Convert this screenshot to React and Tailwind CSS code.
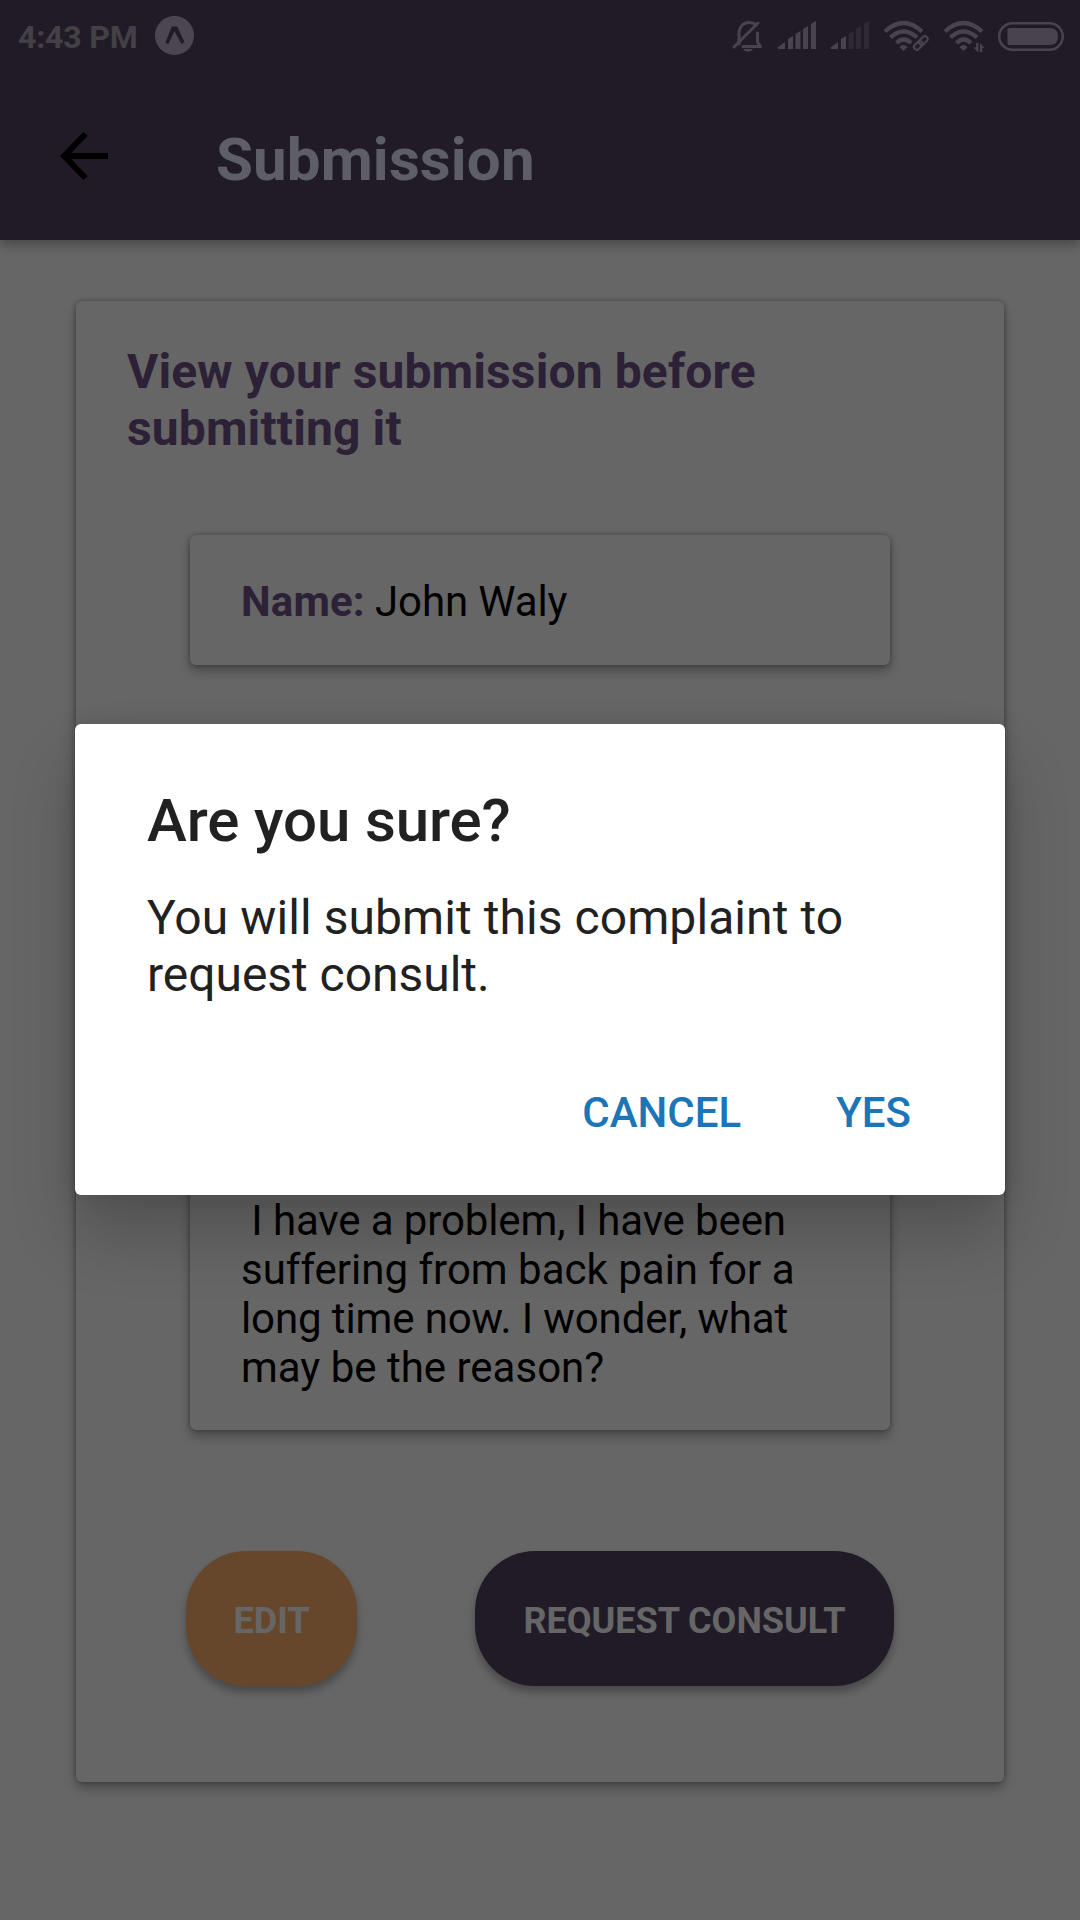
function StatusBar() {
  return (
    <div className="flex h-[72px] items-center justify-between pl-[18px] pr-4 text-white">
      <div className="flex items-center">
        <span className="w-[120px] whitespace-nowrap pt-[2px] text-[32px] font-bold leading-[40px] tracking-[-0.15px] text-white/50">4:43 PM</span>
        <svg className="ml-[17px] -mt-px" width="39" height="39" viewBox="0 0 39 39">
          <circle cx="19.5" cy="19.5" r="19.5" fill="#bfb0c9" />
          <path d="M10.5 26.600 L16.800 10.500 H22.200 L29.500 26 L26.500 28.300 L19.500 15.200 L13.300 28.300 Z" fill="#52445f" />
        </svg>
      </div>
      <svg width="336" height="40" viewBox="728 16 336 40" fill="none" stroke="#b5a8be" strokeWidth="3">
        <g strokeLinejoin="round" strokeLinecap="round">
          <path d="M739 44V34C739 27 743 22.500 749 22.500C752 22.500 754.500 23.500 756 25M757.500 33V42L760.500 46.500H743" />
          <path d="M734 47L758 23" />
        </g>
        <path d="M743 49H753C751 52.500 745 52.500 743 49Z" fill="#b5a8be" stroke="none" />
        <g fill="#b5a8be" stroke="none">
          <path d="M777.500 47.500L785 42V49H779Q777 49 777.500 47.500Z" />
          <path d="M788 39L793 36V49H788Z" />
          <path d="M795.500 34L800.500 31V49H795.500Z" />
          <path d="M803 29L808 26V49H803Z" />
          <path d="M811 24L816 21V49H811Z" />
          <path d="M830.500 47.500L838 42V49H832Q830 49 830.500 47.500Z" />
          <path d="M841 39L846 36V49H841Z" />
        </g>
        <g fill="#75667f" stroke="none">
          <path d="M848.500 34L853.500 31V49H848.500Z" />
          <path d="M856 29L861 26V49H856Z" />
          <path d="M864 24L869 21V49H864Z" />
        </g>
        <g strokeWidth="4.200">
          <path d="M885 31.500Q903.500 14.500 922 31.500M890.500 37.500Q903.500 25.500 917 37.500M896.500 43Q903.500 36 911 43" />
          <path d="M945 31.500Q963.500 14.500 982 31.500M950.500 37.500Q963.500 25.500 977 37.500M956.500 43Q963.500 36 971 43" />
        </g>
        <path d="M899.500 47Q903.500 43 907.500 47L903.500 51Z" fill="#b5a8be" stroke="none" />
        <path d="M959.500 47Q963.500 43 967.500 47L963.500 51Z" fill="#b5a8be" stroke="none" />
        <g strokeWidth="2">
          <rect x="-5" y="-2.800" width="10" height="5.600" rx="2.800" transform="translate(923.300 40.500) rotate(-45)" />
          <rect x="-5" y="-2.800" width="10" height="5.600" rx="2.800" transform="translate(918.300 45.500) rotate(-45)" />
        </g>
        <path d="M978.500 43V52.500L973.500 47.500H976.200V43ZM980 52V43L984.500 48H982.300V52Z" fill="#b5a8be" stroke="none" />
        <rect x="999.200" y="23.200" width="63.600" height="26.600" rx="13.300" strokeWidth="2.600" />
        <path d="M1009 28H1049.500Q1058 28 1058 36.500Q1058 45 1049.500 45H1009Q1007.500 45 1007.500 43.500V29.500Q1007.500 28 1009 28Z" fill="#b5a8be" stroke="none" />
      </svg>
    </div>
  );
}

function Header() {
  return (
    <header className="relative h-[240px] bg-[#52445f] shadow-[0_5px_12px_rgba(0,0,0,0.3)]">
      <StatusBar />
      <div className="flex h-[168px] items-center pl-[60px]">
        <svg width="48" height="48" viewBox="0 0 48 48" className="-mt-px" fill="none" stroke="#000" strokeWidth="6">
          <path d="M25.500 2L4.200 24L25.500 46M5 24H48" />
        </svg>
        <h1 className="ml-[108px] mt-[7px] text-[60px] font-bold leading-[70px] tracking-[0.15px] text-[#e8ebff]">Submission</h1>
      </div>
    </header>
  );
}

function Dialog() {
  return (
    <div className="absolute inset-0 flex flex-col items-center bg-black/60 pt-[724px]">
      <div role="dialog" className="flex h-[471px] w-[930px] flex-col rounded-[6px] bg-white px-[72px] shadow-[0_40px_66px_rgba(0,0,0,0.2),0_0_20px_rgba(0,0,0,0.12)]">
        <h2 className="mt-[62px] text-[60px] font-medium leading-[70px] tracking-[-0.1px] text-[#212121]">Are you sure?</h2>
        <p className="mt-[33px] text-[48px] leading-[57px] text-[#212121]"><span className="tracking-[0.07px]">You will submit this complaint to</span><br /><span className="tracking-[-0.03px]">request consult.</span></p>
        <div className="mt-[85px] flex justify-end gap-[95px] pr-[22px] text-[42px] font-medium leading-[50px] text-[#1c75b7]">
          <button>CANCEL</button>
          <button>YES</button>
        </div>
      </div>
    </div>
  );
}

const cardShadow = "rounded-[6px] bg-white shadow-[0_6px_12px_rgba(0,0,0,0.3),0_0_5px_rgba(0,0,0,0.3)]";

export default function App() {
  return (
    <div className="relative h-[1920px] w-[1080px] overflow-hidden bg-white font-['Roboto',sans-serif]">
      <Header />
      <main className={`mx-[76px] mt-[61px] flex h-[1481px] flex-col px-[51px] ${cardShadow}`}>
        <h2 className="mt-[42px] text-[48px] font-bold leading-[57px] tracking-[0.12px] text-[#6e5387]">View your submission before<br />submitting it</h2>
        <section className={`mx-[63px] mt-[78px] h-[130px] px-[51px] pt-[42px] text-[42px] leading-[49px] ${cardShadow}`}>
          <b className="tracking-[0.15px] text-[#6e5387]">Name:</b><span className="tracking-[-0.12px]"> John Waly</span>
        </section>
        <section className={`mx-[63px] mt-[72px] flex h-[693px] flex-col justify-end whitespace-pre px-[51px] pb-[38px] text-[42px] leading-[49px] ${cardShadow}`}>
          <p><span className="tracking-[-0.12px]">{" I have a problem, I have been"}</span>{"\nsuffering from back pain for a\n"}<span className="tracking-[-0.12px]">long time now. I wonder, what</span>{"\nmay be the reason?"}</p>
        </section>
        <div className="mx-[59px] mt-[121px] flex justify-between text-[36px] font-bold text-white">
          <button className="h-[135px] w-[171px] rounded-[60px] bg-[#ffb16c] pt-[5px] shadow-[0_6px_9px_rgba(0,0,0,0.3)]">EDIT</button>
          <button className="h-[135px] w-[419px] rounded-[60px] bg-[#52445f] pt-[5px] shadow-[0_6px_9px_rgba(0,0,0,0.3)]">REQUEST CONSULT</button>
        </div>
      </main>
      <Dialog />
    </div>
  );
}
